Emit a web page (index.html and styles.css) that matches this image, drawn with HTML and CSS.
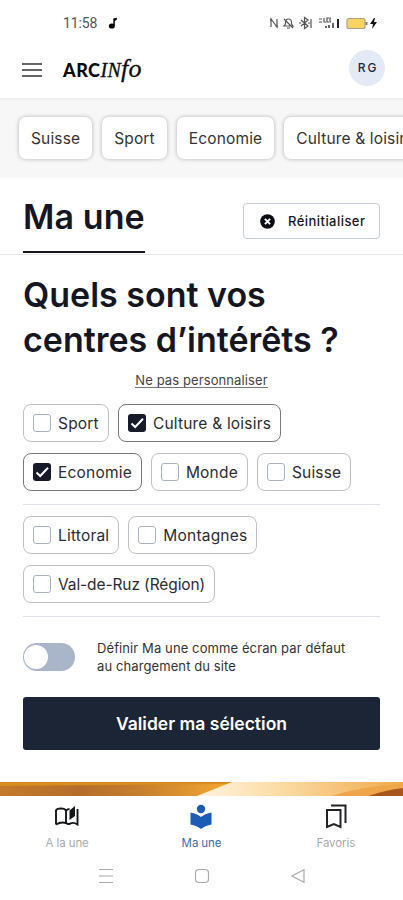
FILE: index.html
```html
<!DOCTYPE html>
<html lang="fr">
<head>
    <meta charset="UTF-8">
    <meta name="viewport" content="width=device-width, initial-scale=1.0">
    <title>Ma une - ArcInfo</title>
    <link rel="stylesheet" href="styles.css">
</head>
<body>
    <div class="status">
        <span class="time">11:58</span>
        <svg class="note" width="10" height="13" viewBox="0 0 10 13"><ellipse cx="3.8" cy="9" rx="3" ry="2.6"/><path d="M5.3 9V1.5L8.8 .8v2L6.8 4v5z"/></svg>
        <svg class="signals" width="112" height="16" viewBox="0 0 112 16" fill="none" stroke="#555" stroke-width="1.2">
            <path d="M2 12V4l6 8V4M1 5l2-1M7 12l2-1"/>
            <path d="M15 11h9l-1.500-2V7a3 3 0 0 0-6 0v2zM18 13h3M15 4l9 9"/>
            <path d="M32 5l7 6-3.500 2.500v-11L39 5l-7 6M30 8h2M42 4v9M39 8h2"/>
            <path d="M50 4h3M50 7h3M55 3v4h2M60 3h-2v4h2M62 3h-1v4h1"/>
            <path d="M57 13v-2M60 13v-3M64 13V8" stroke-width="1.800"/>
            <path d="M69 13V4" stroke="#222" stroke-width="2"/>
            <rect x="78" y="3.500" width="18" height="10" rx="2" fill="#f8d361" stroke="#aaa18a"/>
            <path d="M97.500 7v3" stroke="#777" stroke-width="2"/>
            <path d="M105 3l-4 6h3l-1 5 5-7h-3l1-4z" fill="#111" stroke="none"/>
        </svg>
    </div>
    <header class="header">
        <div class="burger"><i></i><i></i><i></i></div>
        <div class="logo"><b>ARC</b><em class="caps">IN</em><em class="fo">fo</em></div>
        <div class="avatar">RG</div>
    </header>

    <nav class="topics">
        <span class="topic">Suisse</span>
        <span class="topic">Sport</span>
        <span class="topic">Economie</span>
        <span class="topic">Culture &amp; loisirs</span>
    </nav>

    <div class="title-bar">
        <h1>Ma une</h1>
        <div class="reset">
            <svg width="15" height="15" viewBox="0 0 15 15"><circle cx="7.500" cy="7.500" r="7.300" fill="#0c0d14"/><path d="M4.900 4.900l5.200 5.200M10.100 4.900l-5.200 5.200" stroke="#fff" stroke-width="2"/></svg>
            <span>Réinitialiser</span>
        </div>
    </div>

    <main class="content">
        <h2>Quels sont vos<br>centres d’intérêts ?</h2>
        <div class="skip"><a>Ne pas personnaliser</a></div>

        <div class="options">
            <span class="option"><i class="box"></i>Sport</span>
            <span class="option checked"><i class="box"><svg viewBox="0 0 18 18"><path d="M3.500 9.500l3.700 3.500L15 4.800"/></svg></i>Culture &amp; loisirs</span>
            <span class="option checked"><i class="box"><svg viewBox="0 0 18 18"><path d="M3.500 9.500l3.700 3.500L15 4.800"/></svg></i>Economie</span>
            <span class="option"><i class="box"></i>Monde</span>
            <span class="option"><i class="box"></i>Suisse</span>
        </div>
        <div class="options">
            <span class="option"><i class="box"></i>Littoral</span>
            <span class="option"><i class="box"></i>Montagnes</span>
            <span class="option long"><i class="box"></i>Val-de-Ruz (Région)</span>
        </div>

        <div class="default">
            <span class="switch"></span>
            <p>Définir Ma une comme écran par défaut<br>au chargement du site</p>
        </div>
        <div class="submit">Valider ma sélection</div>
    </main>

    <svg class="picture" width="403" height="14" viewBox="0 0 403 14" preserveAspectRatio="none">
        <defs>
            <linearGradient id="sand">
                <stop offset="0" stop-color="#c47a2a"/>
                <stop offset=".2" stop-color="#b56d2b"/>
                <stop offset=".36" stop-color="#c8812d"/>
                <stop offset=".55" stop-color="#f0a62f"/>
            </linearGradient>
            <linearGradient id="light">
                <stop offset="0" stop-color="#fff4df"/>
                <stop offset=".4" stop-color="#fbdca5"/>
                <stop offset="1" stop-color="#f0a94a"/>
            </linearGradient>
        </defs>
        <rect width="403" height="14" fill="url(#sand)"/>
        <path d="M0 0h232v2L0 4z" fill="#d88d20"/>
        <path d="M232 0h171v14H197z" fill="url(#light)"/>
        <path d="M332 14q30-10 71-12v12z" fill="#efa54a"/>
        <path d="M368 14q18-6 35-8v8z" fill="#a8541c"/>
    </svg>

    <footer class="tabs">
        <div class="tab">
            <svg width="28" height="26" viewBox="0 0 28 26" fill="none" stroke="#15161a" stroke-width="1.900"><path d="M3 21.500V7.500Q3.500 5.500 8 5.500q4 0 5 2v12.500M3 21.500q5-3 10-1.500 2.500 2 5.500 0M13 8q1-2 3.500-2M24.500 6v15.500q-3-2-6-1.500"/><path d="M16.500 17V7.500L22 3v10z" fill="#15161a" stroke="none"/></svg>
            <span>A la une</span>
        </div>
        <div class="tab active">
            <svg width="28" height="26" viewBox="0 0 28 26" fill="#1d5cb4"><circle cx="14" cy="6" r="4.200"/><path d="M3.500 9.500Q10 10.500 14 14q4-3.500 10.500-4.500v12Q18 22.500 14 26q-4-3.500-10.500-4.500z"/></svg>
            <span>Ma une</span>
        </div>
        <div class="tab">
            <svg width="28" height="26" viewBox="0 0 28 26" fill="none" stroke="#222326" stroke-width="2"><path d="M5 7h13.500v17L11.800 21 5 24zM9 2.500h14.500V20"/></svg>
            <span>Favoris</span>
        </div>
    </footer>
    <div class="system-nav">
        <svg width="16" height="16" viewBox="0 0 16 16"><path d="M1 1.500h14M1 8h14M1 14.500h14"/></svg>
        <svg width="16" height="16" viewBox="0 0 16 16"><rect x="1.500" y="1.500" width="13" height="13" rx="3.500"/></svg>
        <svg width="16" height="16" viewBox="0 0 16 16"><path d="M14 1.800v12.400L2 8z"/></svg>
    </div>
</body>
</html>
```

FILE: styles.css
```css
* {
    box-sizing: border-box;
    margin: 0;
    padding: 0;
}
body {
    width: 403px;
    height: 900px;
    overflow: hidden;
    background: #fff;
    color: #15161f;
    font-family: Inter, "Liberation Sans", sans-serif;
}
svg {
    display: block;
    flex-shrink: 0;
}
.status {
    display: flex;
    align-items: center;
    height: 46px;
    padding: 0 22px 0 63px;
}
.time {
    width: 45px;
    font: 14px/18px Roboto, sans-serif;
    color: #555;
    letter-spacing: -.1px;
}
.signals {
    margin-left: auto;
}
.header {
    display: flex;
    align-items: center;
    height: 54px;
    padding: 0 18px 8px 22px;
    border-bottom: 2px solid #efefef;
}
.burger {
    display: flex;
    flex-direction: column;
    gap: 4px;
    width: 20px;
    margin-top: 3px;
}
.burger i {
    height: 2px;
    background: #666;
}
/* logo */
.logo {
    display: flex;
    align-items: baseline;
    margin-left: 21px;
    padding-top: 2px;
    color: #0c0c0c;
    line-height: 30px;
}
.logo b {
    font: 900 18px/30px Lato, sans-serif;
    letter-spacing: .5px;
}
.logo em {
    font: italic 20px/30px "Liberation Serif", serif;
    letter-spacing: .3px;
    -webkit-text-stroke: .3px #0c0c0c;
}
.logo .fo {
    font-size: 26px;
}
.avatar {
    width: 36px;
    height: 36px;
    margin-left: auto;
    border-radius: 50%;
    background: #e4e9f6;
    color: #252733;
    font-size: 12px;
    font-weight: 500;
    line-height: 36px;
    text-align: center;
    letter-spacing: 2px;
    text-indent: 2px;
}
.topics {
    display: flex;
    gap: 10px;
    height: 78px;
    padding: 17px 0 0 19px;
    overflow: hidden;
    background: #f7f7f7;
}
.topic {
    flex-shrink: 0;
    height: 42px;
    padding: 0 12px;
    border-radius: 7px;
    background: #fff;
    box-shadow: 0 0 4px rgba(0, 0, 0, .28);
    color: #333;
    font-size: 15.500px;
    line-height: 43px;
    letter-spacing: .15px;
}
.title-bar {
    display: flex;
    justify-content: space-between;
    align-items: flex-start;
    height: 77px;
    padding: 0 23px;
    border-bottom: 1px solid #e8e8ea;
}
h1 {
    height: 75px;
    padding-top: 16px;
    border-bottom: 2px solid #15161f;
    font-size: 34px;
    font-weight: 600;
    line-height: 45px;
    letter-spacing: .1px;
}
.reset {
    display: flex;
    align-items: center;
    gap: 13px;
    width: 137px;
    height: 36px;
    margin-top: 25px;
    padding-left: 16px;
    border: 1px solid #c6ccd6;
    border-radius: 4px;
    font-size: 13px;
    font-weight: 500;
    letter-spacing: .45px;
}
.content {
    padding: 17px 23px 0;
}
h2 {
    font-size: 34px;
    font-weight: 600;
    line-height: 45px;
    white-space: nowrap;
}
.skip {
    height: 42px;
    padding-top: 10px;
    text-align: center;
    font-size: 13px;
    line-height: 17px;
    letter-spacing: .1px;
    color: #444;
}
.skip a {
    display: inline-block;
    height: 16px;
    border-bottom: 1px solid #777;
}
/* interests */
.options {
    display: flex;
    flex-wrap: wrap;
    gap: 11px 9px;
    padding-bottom: 13px;
    margin-bottom: 11px;
    border-bottom: 1px solid #dfe1ef;
}
.option {
    display: flex;
    align-items: center;
    height: 38px;
    padding: 0 9px;
    border: 1px solid #bfc1c9;
    border-radius: 8px;
    color: #2b2c33;
    font-size: 15.500px;
    letter-spacing: .2px;
    white-space: nowrap;
}
.option.long {
    letter-spacing: -.1px;
}
.option.checked {
    border-color: #77787e;
}
.box {
    width: 18px;
    height: 18px;
    margin-right: 7px;
    border: 1px solid #a9b2c4;
    border-radius: 3px;
}
.checked .box {
    border: 0;
    background: #171a29;
}
.box path {
    fill: none;
    stroke: #fff;
    stroke-width: 2;
}
.default {
    display: flex;
    align-items: center;
    gap: 22px;
    height: 69px;
    padding-bottom: 12px;
}
.switch {
    width: 52px;
    height: 28px;
    padding: 2px 1px;
    border-radius: 14px;
    background: #a9b5c8;
}
.switch::before {
    content: "";
    display: block;
    width: 24px;
    height: 24px;
    border-radius: 50%;
    background: #fff;
}
.default p {
    color: #333;
    font-size: 13px;
    line-height: 18px;
    letter-spacing: .1px;
    white-space: nowrap;
}
.submit {
    height: 53px;
    border-radius: 3px;
    background: #1c2535;
    color: #fff;
    font-size: 17.500px;
    font-weight: 600;
    line-height: 53px;
    text-align: center;
}
.picture {
    margin-top: 32px;
}
.tabs {
    display: grid;
    grid-template-columns: repeat(3, 1fr);
    height: 61px;
    padding-top: 7px;
}
.tab {
    display: flex;
    flex-direction: column;
    align-items: center;
    gap: 6px;
    color: #aaa;
    font-size: 11.500px;
    line-height: 16px;
    letter-spacing: -.1px;
}
.tab.active {
    color: #396caf;
}
.system-nav {
    display: flex;
    justify-content: center;
    gap: 80px;
    padding-top: 11px;
}
.system-nav svg {
    fill: none;
    stroke: #aaa;
    stroke-width: 1.2;
}
```
